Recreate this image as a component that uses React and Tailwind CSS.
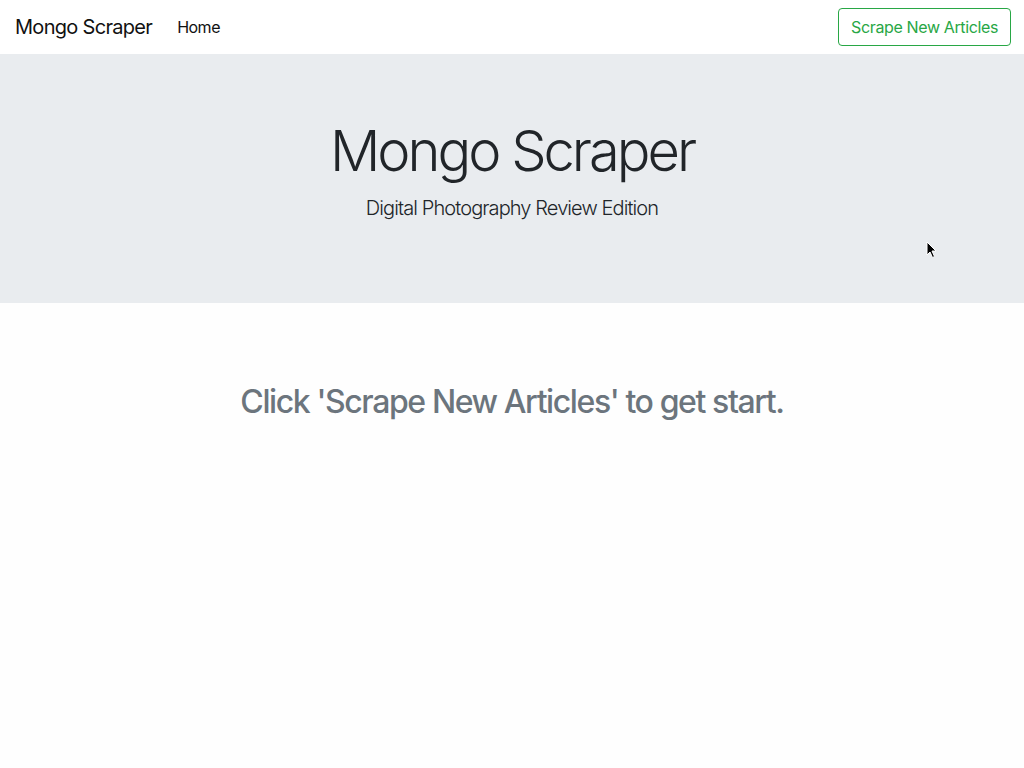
import React from "react";

export default function App() {
  return (
    <div className="relative min-h-[768px] bg-[#fefefe] text-[#212529] font-['Inter','Liberation_Sans',sans-serif]">
      {/* Navbar */}
      <nav className="flex h-[54px] items-center justify-between bg-white px-[15px]">
        <div className="flex items-center">
          <span className="text-[20px] tracking-[-0.7px] text-[#111]">Mongo Scraper</span>
          <a href="#" className="ml-[25px] text-[16px] tracking-[-0.5px] text-[#111]">
            Home
          </a>
        </div>
        <button className="mr-[-2px] h-[38px] rounded-[4px] border border-[#28a745] px-[12px] text-[16px] tracking-[-0.37px] text-[#28a745]">
          Scrape New Articles
        </button>
      </nav>

      {/* Jumbotron */}
      <header className="flex h-[249px] flex-col items-center bg-[#e9ecef] pt-[64px]">
        <h1 className="text-[56px] font-light leading-[1.2] tracking-[-3px] text-[#212529]">
          Mongo Scraper
        </h1>
        <p className="mt-[8px] text-[20px] font-light leading-[1.5] tracking-[-0.9px] text-[#212529]">
          Digital Photography Review Edition
        </p>
      </header>

      <main className="flex justify-center pt-[80px]">
        <h2 className="text-[32px] font-medium leading-[1.2] tracking-[-1.4px] text-[#6c757d]">
          Click 'Scrape New Articles' to get start.
        </h2>
      </main>

      {/* mouse cursor */}
      <svg className="absolute left-[926px] top-[241px]" width="12" height="18" viewBox="0 0 12 18">
        <path d="M1 1 L1 14 L4 11 L6.5 16.5 L8.5 15.5 L6 10 L10 10 Z" fill="#000" stroke="#fff" strokeWidth="1" />
      </svg>
    </div>
  );
}
